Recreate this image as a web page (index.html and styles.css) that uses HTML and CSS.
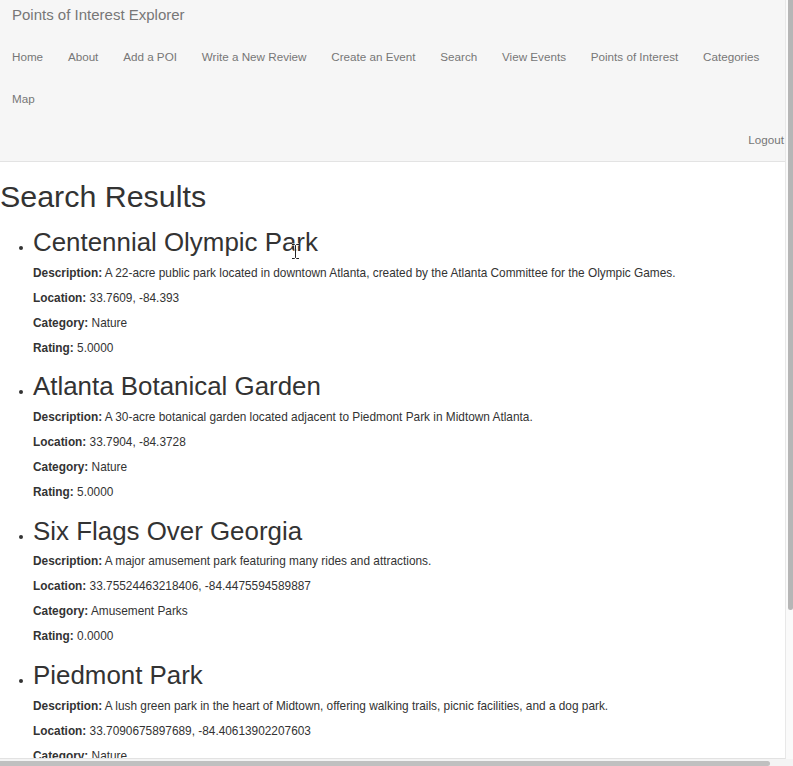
FILE: index.html
```html
<!DOCTYPE html>
<html lang="en">
<head>
<meta charset="utf-8">
<title>Points of Interest Explorer - Search Results</title>
<link rel="stylesheet" href="styles.css">
</head>
<body>
<div class="frame">
  <div class="page">
    <nav class="navbar">
      <div class="brand-row"><a class="brand" href="#">Points of Interest Explorer</a></div>
      <ul class="nav">
        <li><a href="#">Home</a></li>
        <li><a href="#">About</a></li>
        <li><a href="#">Add a POI</a></li>
        <li><a href="#">Write a New Review</a></li>
        <li><a href="#">Create an Event</a></li>
        <li><a href="#">Search</a></li>
        <li><a href="#">View Events</a></li>
        <li><a href="#">Points of Interest</a></li>
        <li><a href="#">Categories</a></li>
        <li><a href="#">Map</a></li>
      </ul>
      <div class="nav-right"><a href="#">Logout</a></div>
    </nav>

    <h1>Search Results</h1>
    <ul class="results">
      <li>
        <h2>Centennial Olympic Park</h2>
        <p><strong>Description:</strong> A 22-acre public park located in downtown Atlanta, created by the Atlanta Committee for the Olympic Games.</p>
        <p><strong>Location:</strong> 33.7609, -84.393</p>
        <p><strong>Category:</strong> Nature</p>
        <p><strong>Rating:</strong> 5.0000</p>
      </li>
      <li>
        <h2>Atlanta Botanical Garden</h2>
        <p><strong>Description:</strong> A 30-acre botanical garden located adjacent to Piedmont Park in Midtown Atlanta.</p>
        <p><strong>Location:</strong> 33.7904, -84.3728</p>
        <p><strong>Category:</strong> Nature</p>
        <p><strong>Rating:</strong> 5.0000</p>
      </li>
      <li>
        <h2>Six Flags Over Georgia</h2>
        <p><strong>Description:</strong> A major amusement park featuring many rides and attractions.</p>
        <p><strong>Location:</strong> 33.75524463218406, -84.4475594589887</p>
        <p><strong>Category:</strong> Amusement Parks</p>
        <p><strong>Rating:</strong> 0.0000</p>
      </li>
      <li>
        <h2>Piedmont Park</h2>
        <p><strong>Description:</strong> A lush green park in the heart of Midtown, offering walking trails, picnic facilities, and a dog park.</p>
        <p><strong>Location:</strong> 33.7090675897689, -84.40613902207603</p>
        <p><strong>Category:</strong> Nature</p>
        <p><strong>Rating:</strong> 0.0000</p>
      </li>
    </ul>
  </div>

  <svg class="cursor" width="9" height="17" viewBox="0 0 9 17" aria-hidden="true">
    <path d="M1 1.5h2.5l1 1 1-1H8M4.5 2.5v12M1 15.5h2.5l1-1 1 1H8" fill="none" stroke="#fff" stroke-width="2.2"/>
    <path d="M1 1.5h2.5l1 1 1-1H8M4.5 2.5v12M1 15.5h2.5l1-1 1 1H8" fill="none" stroke="#222" stroke-width="1"/>
  </svg>

  <div class="vscroll"><div class="vthumb"></div></div>
  <div class="hscroll"><div class="hthumb"></div></div>
</div>
</body>
</html>
```

FILE: styles.css
```css
html, body {
  margin: 0;
  padding: 0;
}

body {
  font-family: "Liberation Sans", Arial, Helvetica, sans-serif;
  font-size: 11.85px;
  line-height: 16.67px;
  color: #333;
  background: #fff;
  overflow: hidden;
}

.frame {
  position: relative;
  width: 793px;
  height: 766px;
  overflow: hidden;
  background: #fff;
}

.page {
  width: 785px;
  height: 758px;
  overflow: hidden;
  border-right: 1px solid #e8e8e8;
  border-bottom: 1px solid #e2e2e2;
}

/* Navbar */
.navbar {
  background: #f6f6f6;
  border-bottom: 1px solid #e3e3e3;
  margin-bottom: 16.67px;
}

.brand-row {
  height: 36px;
  padding: 0 12px;
}

.brand {
  font-size: 15px;
  line-height: 30px;
  color: #777;
  text-decoration: none;
}

.nav {
  display: flex;
  flex-wrap: wrap;
  column-gap: 24.8px;
  list-style: none;
  margin: 0;
  padding: 0 12px;
  font-size: 11.67px;
}

.nav li {
  line-height: 41.67px;
}

.nav a,
.nav-right a {
  color: #777;
  text-decoration: none;
}

.nav-right {
  text-align: right;
  line-height: 41.67px;
  padding-right: 1px;
  font-size: 11.67px;
}

/* Content */
h1 {
  font-size: 30.4px;
  line-height: 34px;
  font-weight: normal;
  margin: 16.67px 0 8.33px;
  color: #333;
}

.results {
  margin: 0 0 8.33px;
  padding-left: 33px;
}

h2 {
  font-size: 25.9px;
  line-height: 27.5px;
  font-weight: normal;
  margin: 16.67px 0 8.33px;
  color: #333;
}

p {
  margin: 0 0 8.33px;
}

strong {
  font-weight: bold;
}

/* Overlays: mouse cursor and browser scrollbars */
.cursor {
  position: absolute;
  left: 291px;
  top: 243px;
}

.vscroll {
  position: absolute;
  top: 0;
  right: 0;
  width: 7px;
  height: 759px;
  background: #fafafa;
}

.vthumb {
  position: absolute;
  top: 0;
  left: 2px;
  width: 5px;
  height: 610px;
  background: #b6b6b6;
  border-radius: 0 0 3px 3px;
}

.hscroll {
  position: absolute;
  left: 0;
  bottom: 0;
  width: 793px;
  height: 7px;
  background: #f4f4f4;
}

.hthumb {
  position: absolute;
  left: 0;
  top: 2px;
  width: 770px;
  height: 5px;
  background: #c0c0c0;
  border-radius: 0 3px 3px 0;
}
```
